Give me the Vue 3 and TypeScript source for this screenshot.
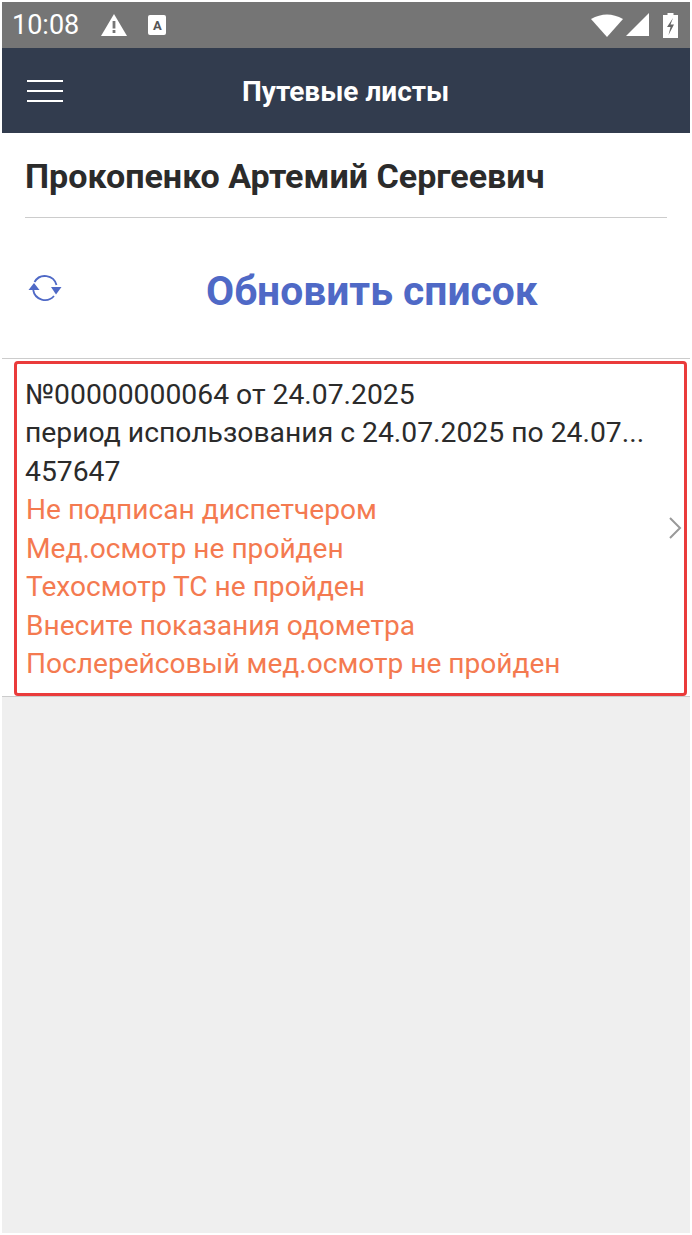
<script setup lang="ts">
const infoLines = [
  '№00000000064 от 24.07.2025',
  'период использования с 24.07.2025 по 24.07...',
  '457647',
];

const warnings = [
  'Не подписан диспетчером',
  'Мед.осмотр не пройден',
  'Техосмотр ТС не пройден',
  'Внесите показания одометра',
  'Послерейсовый мед.осмотр не пройден',
];
</script>

<template>
  <div class="phone">
    <div class="status-bar">
      <div class="status-left">
        <span class="time">10:08</span>
        <svg class="warn-icon" width="26" height="24" viewBox="0 0 26 24">
          <path d="M13 1 L26 23 H0 Z" fill="#fff" />
          <rect x="11.6" y="8" width="2.8" height="7.5" fill="#757575" />
          <rect x="11.6" y="17" width="2.8" height="3" fill="#757575" />
        </svg>
        <div class="a-icon"><span>A</span></div>
      </div>
      <div class="status-right">
        <svg width="32" height="24" viewBox="0 0 32 24">
          <path d="M0 6 Q16 -3 32 6 L16 24 Z" fill="#fff" />
        </svg>
        <svg class="signal" width="23" height="24" viewBox="0 0 23 24">
          <path d="M23 0 V23 H0 Z" fill="#fff" />
        </svg>
        <svg class="battery" width="15" height="25" viewBox="0 0 15 25">
          <path d="M4.5 0 H10.5 V2 H15 V25 H0 V2 H4.5 Z" fill="#fff" />
          <path d="M10 5 L4 14 H7.5 L5.5 22 L11 11.5 H7.5 Z" fill="#666" />
        </svg>
      </div>
    </div>

    <header class="nav-bar">
      <button class="menu-btn" aria-label="Меню">
        <span></span>
        <span></span>
        <span></span>
      </button>
      <h1 class="title">Путевые листы</h1>
    </header>

    <section class="driver">
      <div class="driver-name">Прокопенко Артемий Сергеевич</div>
    </section>

    <section class="refresh">
      <svg class="refresh-icon" width="34" height="28" viewBox="0 0 34 28">
        <path d="M6.5 8 A12 12 0 0 1 28.5 11" fill="none" stroke="#4f69c6" stroke-width="1.8" />
        <path d="M5.2 16 A12 12 0 0 0 26 22" fill="none" stroke="#4f69c6" stroke-width="1.8" />
        <path d="M0.5 16 L6 9 L11.5 16 Z" fill="#4f69c6" />
        <path d="M23 13 L33.5 13 L28 20.5 Z" fill="#4f69c6" />
      </svg>
      <div class="refresh-label">Обновить список</div>
    </section>

    <section class="list">
      <article class="card">
        <div class="card-text">
          <div v-for="line in infoLines" :key="line" class="line">{{ line }}</div>
          <div v-for="line in warnings" :key="line" class="line warning">{{ line }}</div>
        </div>
        <svg class="chevron" width="14" height="24" viewBox="0 0 14 24">
          <path d="M2 2 L12 12 L2 22" fill="none" stroke="#999" stroke-width="2" />
        </svg>
      </article>
    </section>

    <div class="empty"></div>
  </div>
</template>

<style>
html,
body {
  margin: 0;
  background: #fff;
}
</style>

<style scoped>
.phone {
  box-sizing: border-box;
  width: 692px;
  height: 1235px;
  padding: 2px;
  display: flex;
  flex-direction: column;
  background: #fff;
  font-family: Roboto, "Liberation Sans", sans-serif;
}

.status-bar {
  height: 46px;
  flex-shrink: 0;
  background: #757575;
  display: flex;
  align-items: center;
  justify-content: space-between;
  padding: 0 12px 0 10px;
}

.status-left,
.status-right {
  display: flex;
  align-items: center;
}

.time {
  color: #fff;
  font-size: 27px;
  line-height: 46px;
}

.warn-icon {
  margin-left: 22px;
}

.a-icon {
  width: 18px;
  height: 20px;
  margin-left: 21px;
  background: #fff;
  border-radius: 2px;
  display: flex;
  align-items: center;
  justify-content: center;
  color: #555;
  font-size: 13px;
  font-weight: 700;
}

.signal {
  margin-left: 3px;
}

.battery {
  margin-left: 14px;
}

.nav-bar {
  height: 85px;
  flex-shrink: 0;
  background: #323c4e;
  display: flex;
  align-items: center;
}

.menu-btn {
  width: 36px;
  margin-left: 25px;
  padding: 0;
  border: none;
  background: none;
  display: flex;
  flex-direction: column;
  gap: 8px;
}

.menu-btn span {
  display: block;
  height: 2px;
  background: #fff;
}

.title {
  margin: 0 0 0 179px;
  color: #fff;
  font-size: 28px;
  font-weight: 700;
  line-height: 85px;
  padding-top: 1px;
}

.driver {
  height: 85px;
  flex-shrink: 0;
  box-sizing: border-box;
  margin: 0 23px;
  border-bottom: 1px solid #ccc;
  display: flex;
  align-items: center;
  padding-top: 2px;
}

.driver-name {
  color: #2b2b2b;
  font-size: 34.1px;
  font-weight: 700;
}

.refresh {
  height: 141px;
  flex-shrink: 0;
  box-sizing: border-box;
  border-bottom: 1px solid #ccc;
  display: flex;
  align-items: center;
  padding-left: 26px;
}

.refresh-icon {
  margin-bottom: 1px;
}

.refresh-label {
  margin-left: 144px;
  padding-top: 6px;
  color: #4f69c6;
  font-size: 40.8px;
  font-weight: 700;
}

.list {
  flex-shrink: 0;
  padding: 2px 3px 0 12px;
  border-bottom: 1px solid #ccc;
}

.card {
  box-sizing: border-box;
  height: 335px;
  border: 3px solid #ea3b3b;
  border-radius: 4px;
  display: flex;
  align-items: center;
  justify-content: space-between;
  padding: 2px 2px 0 8px;
}

.chevron {
  margin-bottom: 4px;
}

.line {
  color: #2b2b2b;
  font-size: 28.3px;
  line-height: 38.5px;
  white-space: nowrap;
}

.warning {
  padding-left: 1px;
  color: #f47a50;
  font-size: 28.1px;
}

.empty {
  flex: 1;
  background: #efefef;
}
</style>
